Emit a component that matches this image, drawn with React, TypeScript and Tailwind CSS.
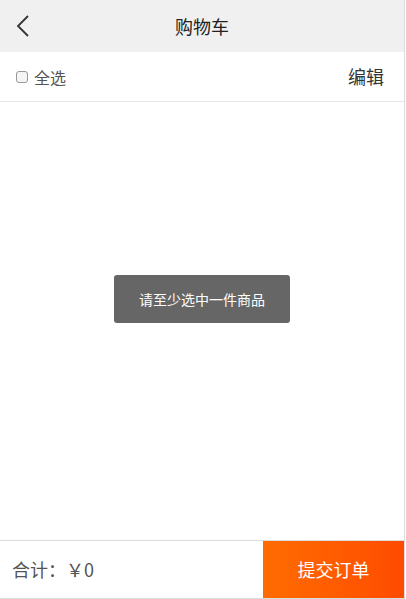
import React from "react";

export default function App() {
  const font = { fontFamily: '"Noto Sans CJK SC", "Noto Sans", sans-serif' };
  return (
    <div className="w-[406px] h-[599px] bg-white flex relative" style={font}>
      <div className="w-[405px] h-full flex flex-col border-r border-[#dcdcdc]">
        <div className="h-[52px] bg-[#f0f0f0] flex items-center relative shrink-0">
          <div className="pl-[15px] flex items-center">
            <svg width="16" height="24" viewBox="0 0 16 24" fill="none">
              <path d="M13 2 L3 12 L13 22" stroke="#333" strokeWidth="1.8" />
            </svg>
          </div>
          <div className="absolute inset-0 flex items-center justify-center text-[18px] text-[#222] pointer-events-none">
            购物车
          </div>
        </div>
        <div className="h-[50px] flex items-center justify-between pl-[16px] pr-[20px] border-b border-[#e5e5e5] shrink-0">
          <label className="flex items-center gap-[6px] text-[16px] text-[#555]">
            <span className="w-[12px] h-[12px] rounded-[3px] border border-[#999] bg-[#f5f5f5] inline-block" />
            全选
          </label>
          <span className="text-[18px] text-[#333]">编辑</span>
        </div>
        <div className="flex-1" />
        <div className="h-[59px] border-t border-b border-[#dcdcdc] flex items-stretch shrink-0">
          <div className="flex-1 flex items-center pl-[12px] text-[18px] text-[#555]">
            合计：￥0
          </div>
          <div className="w-[141px] flex items-center justify-center text-white text-[18px] bg-gradient-to-r from-[#ff6c00] to-[#ff4a00]">
            提交订单
          </div>
        </div>
      </div>
      <div className="absolute left-[114px] top-[275px] w-[176px] h-[48px] bg-[#666] rounded-[3px] flex items-center justify-center text-white text-[14px]">
        请至少选中一件商品
      </div>
    </div>
  );
}
